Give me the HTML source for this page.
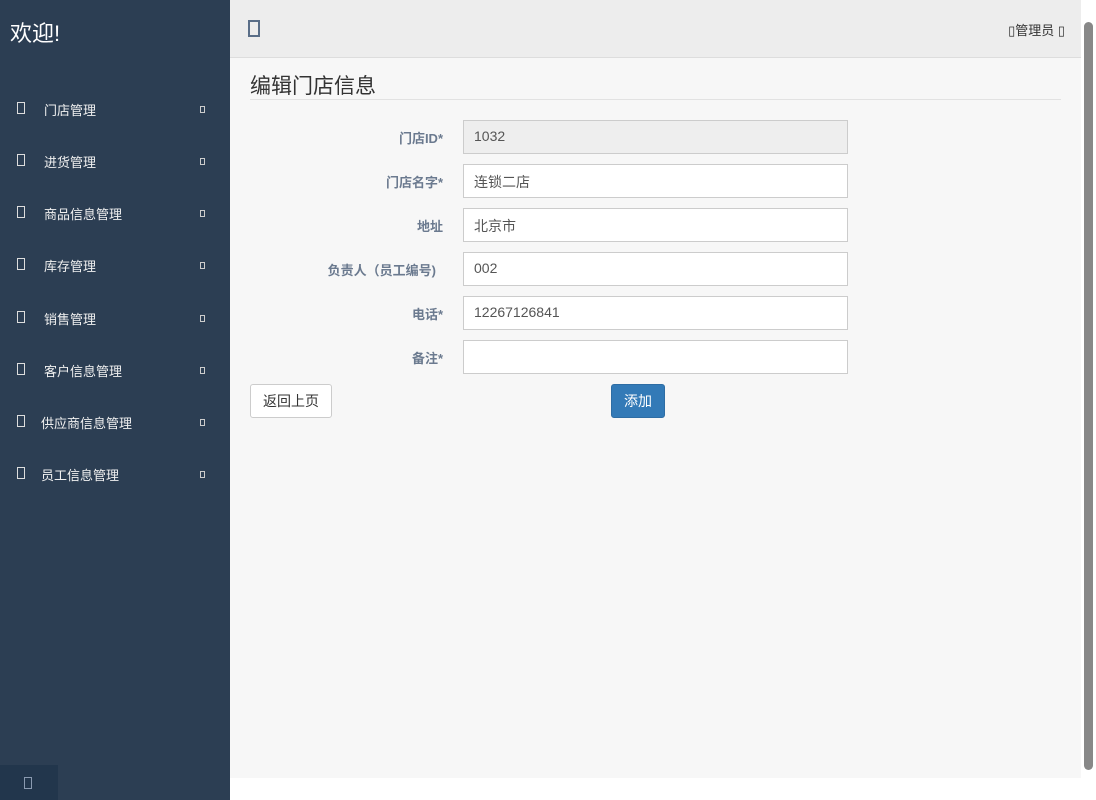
<!DOCTYPE html>
<html><head><meta charset="utf-8"><style>
*{box-sizing:border-box;margin:0;padding:0}
body{width:1096px;height:800px;overflow:hidden;background:#fff;font-family:"Liberation Sans","Noto Sans CJK SC",sans-serif;position:relative}
.side{position:absolute;left:0;top:0;width:230px;height:800px;background:#2c3e53;color:#fff}
.side h1{font-weight:normal;font-size:22px;position:absolute;left:10px;top:16px}
.item{position:absolute;left:0;width:230px;font-size:13px;color:#f0f0f0}
.item .ic{position:absolute;left:17px;top:-8px;width:8px;height:12px;border:1.5px solid #ddd}
.item .t{position:absolute;top:-10px}
.item .ar{position:absolute;left:200px;top:-4px;width:5px;height:7px;border:1px solid #ccc}
.sbtn{position:absolute;left:0;top:765px;width:58px;height:35px;background:#22364c}
.sbtn i{position:absolute;left:24px;top:12px;width:8px;height:12px;border:1.5px solid #8a9ab0}
.head{position:absolute;left:230px;top:0;width:851px;height:58px;background:#ededed;border-bottom:1px solid #ddd}
.head .ic{position:absolute;left:18px;top:20px;width:12px;height:17px;border:2px solid #5a6e88}
.head .u{position:absolute;right:16px;top:20px;font-size:13px;color:#333}
.main{position:absolute;left:230px;top:58px;width:851px;height:720px;background:#f7f7f7}
.main h2{position:absolute;left:20px;top:12px;font-weight:normal;font-size:21px;color:#333}
.hr{position:absolute;left:20px;top:41px;width:811px;border-top:1px solid #e2e2e2}
.lab{position:absolute;right:638px;font-size:13px;font-weight:bold;color:#6b7a8f;text-align:right}
.inp{position:absolute;left:233px;width:385px;height:34px;border:1px solid #ccc;background:#fff;font-size:14px;color:#555;padding:7px 10px}
.btn{position:absolute;top:326px;height:34px;font-size:14px;border-radius:3px;padding:6px 12px}
.sb{position:absolute;left:1081px;top:0;width:15px;height:800px;background:#fff}
.sb .th{position:absolute;left:3px;top:22px;width:9px;height:748px;background:#888;border-radius:5px}
</style></head><body>
<div class="side"><h1>欢迎!</h1>
<div class="item" style="top:110px"><i class="ic"></i><span class="t" style="left:44px">门店管理</span><i class="ar"></i></div>
<div class="item" style="top:162px"><i class="ic"></i><span class="t" style="left:44px">进货管理</span><i class="ar"></i></div>
<div class="item" style="top:214px"><i class="ic"></i><span class="t" style="left:44px">商品信息管理</span><i class="ar"></i></div>
<div class="item" style="top:266px"><i class="ic"></i><span class="t" style="left:44px">库存管理</span><i class="ar"></i></div>
<div class="item" style="top:319px"><i class="ic"></i><span class="t" style="left:44px">销售管理</span><i class="ar"></i></div>
<div class="item" style="top:371px"><i class="ic"></i><span class="t" style="left:44px">客户信息管理</span><i class="ar"></i></div>
<div class="item" style="top:423px"><i class="ic"></i><span class="t" style="left:41px">供应商信息管理</span><i class="ar"></i></div>
<div class="item" style="top:475px"><i class="ic"></i><span class="t" style="left:41px">员工信息管理</span><i class="ar"></i></div>
<div class="sbtn"><i></i></div>
</div>
<div class="head"><i class="ic"></i><span class="u">▯管理员 ▯</span></div>
<div class="main"><h2>编辑门店信息</h2><div class="hr"></div>
<div class="lab" style="top:70px">门店ID*</div><div class="inp" style="top:62px;background:#eee">1032</div>
<div class="lab" style="top:114px">门店名字*</div><div class="inp" style="top:106px">连锁二店</div>
<div class="lab" style="top:158px">地址</div><div class="inp" style="top:150px">北京市</div>
<div class="lab" style="top:202px;right:645px">负责人（员工编号)</div><div class="inp" style="top:194px">002</div>
<div class="lab" style="top:246px">电话*</div><div class="inp" style="top:238px">12267126841</div>
<div class="lab" style="top:290px">备注*</div><div class="inp" style="top:282px"></div>
<div class="btn" style="left:20px;width:82px;background:#fff;border:1px solid #ccc;color:#333">返回上页</div>
<div class="btn" style="left:381px;width:54px;background:#337ab7;border:1px solid #2e6da4;color:#fff">添加</div>
</div>
<div class="sb"><div class="th"></div></div>
</body></html>
